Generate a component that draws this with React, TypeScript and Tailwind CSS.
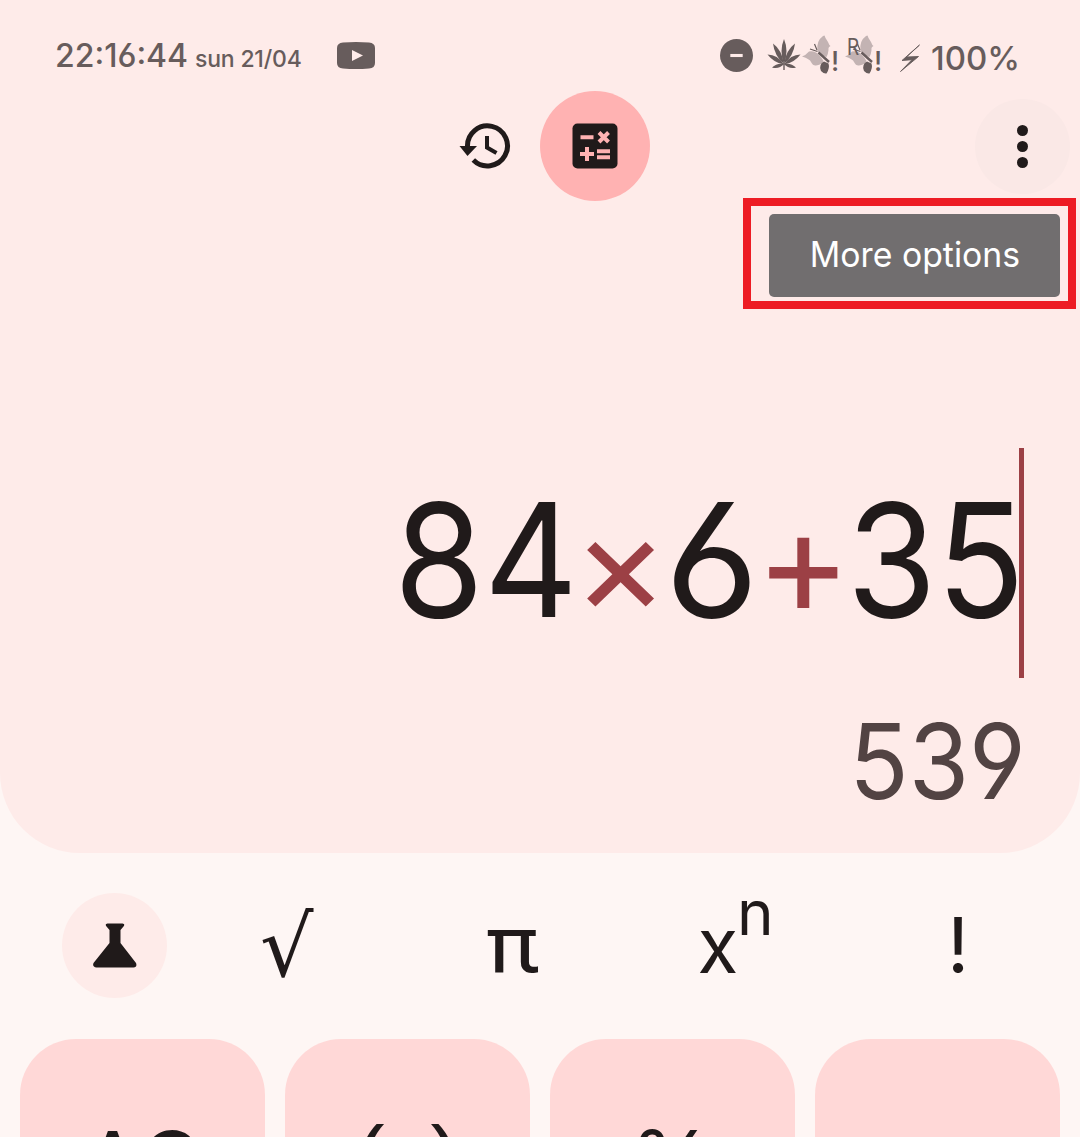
import React from "react";

const inter = "font-['Inter',sans-serif] [font-feature-settings:'cv03','cv04'] leading-none whitespace-nowrap";
const roboto = "font-['Roboto',sans-serif] leading-none whitespace-nowrap";
const dejavu = "font-['DejaVu_Sans',sans-serif] leading-none whitespace-nowrap";
const liberation = "font-['Liberation_Sans',sans-serif] leading-none whitespace-nowrap";

function Butterfly({ roaming = false }: { roaming?: boolean }) {
  return (
    <span className="relative block h-[40px] w-[40px]">
      <svg viewBox="0 0 40 40" className="h-[40px] w-[40px]">
        <g fill="#c3b3b3">
          <path d="M15.500 16Q14 6 21 1L22.500 0.500Q23 3 26 7Q27 10 28.500 11Q26 12 26.500 15Q26 20 24.500 22Q18 20 15.500 16Z" />
          <path d="M0 21.500Q4 20 7 16.500Q13 15.500 17 20Q20 23 21.500 26Q19 30 14 30.500Q11 31 9 27Q8 24 0 21.500Z" />
        </g>
        <path d="M18.500 30.500Q19 27.500 22 26.500L26.500 28.500Q28 33 24.500 38.500Q22 39 19 36Q17.500 33 18.500 30.500Z" fill="#675c5c" />
        <path d="M16.500 17.500L27 27" stroke="#675c5c" strokeWidth="2.4" />
        <path d="M15.500 16.500L8 14M15 15L12.500 9" stroke="#675c5c" strokeWidth="1.2" />
      </svg>
      {roaming && (
        <span className={`${roboto} absolute left-[1px] top-[1px] scale-x-[0.85] text-[23px] text-[#675c5c]`}>R</span>
      )}
      <span className={`${inter} absolute left-[29px] top-[13px] text-[27px] font-medium text-[#675c5c]`}>!</span>
    </span>
  );
}

function HempLeaf() {
  return (
    <svg viewBox="0 0 34 32" className="ml-[14px] mt-[4px] h-[32px] w-[34px]" fill="#675c5c">
      <path d="M17 25Q12 12 17 0Q22 12 17 25Z" />
      <path d="M17 25Q7.500 17 6 4.500Q15 11 17 25Z" />
      <path d="M17 25Q26.500 17 28 4.500Q19 11 17 25Z" />
      <path d="M17 25.500Q7 24 0.500 15.500Q10.500 15.500 17 25.500Z" />
      <path d="M17 25.500Q27 24 33.500 15.500Q23.500 15.500 17 25.500Z" />
      <path d="M17 25Q12 30.500 5 28.500Q10 23.500 17 25Z" />
      <path d="M17 25Q22 30.500 29 28.500Q24 23.500 17 25Z" />
      <path d="M16.300 24H17.700V31H16.300Z" />
    </svg>
  );
}

function StatusBar() {
  return (
    <div className="flex h-[91px] items-start pl-[55px] pt-[35px] text-[#675c5c]">
      <div className="mt-[5px] flex w-[282px] items-baseline">
        <span className={`${inter} w-[140px] text-[32px] font-medium`}>22:16:44</span>
        <span className={`${inter} text-[23px] font-medium tracking-[-0.2px]`}>sun 21/04</span>
      </div>
      <svg viewBox="0 0 38 27" className="mt-[7px] h-[27px] w-[38px]">
        <path d="M6 0.500Q19 -0.500 32 0.500Q38 1 38 6V21Q38 26 32 26.500Q19 27.500 6 26.500Q0 26 0 21V6Q0 1 6 0.500Z" fill="#675c5c" />
        <path d="M15 8L26 13.500L15 19Z" fill="#feebe9" />
      </svg>
      <svg viewBox="0 0 32 32" className="ml-[345px] mt-[4px] h-[33px] w-[33px]">
        <circle cx="16" cy="16" r="16" fill="#675c5c" />
        <path d="M10 16H22" stroke="#feebe9" strokeWidth="3" />
      </svg>
      <HempLeaf />
      <div className="ml-[1px] flex gap-[3px]">
        <Butterfly />
        <Butterfly roaming />
      </div>
      <svg viewBox="900 44 20 28" className="ml-[15px] mt-[9px] h-[28px] w-[20px]">
        <path d="M919.500 45L906.500 57L918.500 56.500L900.500 71.500L912 59.700L902 60.500Z" fill="#675c5c" stroke="#675c5c" strokeWidth="0.900" />
      </svg>
      <span className={`${inter} ml-[11px] mt-[7px] text-[33px] font-medium`}>100%</span>
    </div>
  );
}

function Toolbar() {
  return (
    <div className="flex h-[110px] items-center pl-[459px]">
      <svg viewBox="459 121 54 50" className="h-[50px] w-[54px]">
        <path d="M467.5 147A20 20 0 1 1 473.3 160" fill="none" stroke="#201a1a" strokeWidth="5" />
        <path d="M459.5 146H477L467.5 156Z" fill="#201a1a" />
        <path d="M487 136V147.500L496.500 153" fill="none" stroke="#201a1a" strokeWidth="4" />
      </svg>
      <div className="ml-[27px] flex h-[110px] w-[110px] items-center justify-center rounded-full bg-[#ffb2b2]">
        <svg viewBox="572 123 46 46" className="h-[46px] w-[46px]">
          <rect x="572.500" y="123.500" width="45" height="45" rx="5" fill="#201a1a" />
          <path d="M580.500 137.300H593.500M599 132.500L608.500 142M608.500 132.500L599 142M580 154H594M587 147V161M597 151.200H610M597 157.200H610" stroke="#ffb2b2" strokeWidth="4" />
        </svg>
      </div>
      <div className="ml-[325px] flex h-[95px] w-[95px] flex-col items-center justify-center gap-[5px] rounded-full bg-[#fae8e6]">
        <i className="h-[11px] w-[11px] rounded-full bg-[#201a1a]" />
        <i className="h-[11px] w-[11px] rounded-full bg-[#201a1a]" />
        <i className="h-[11px] w-[11px] rounded-full bg-[#201a1a]" />
      </div>
    </div>
  );
}

const tokens = [
  { text: "84", box: "w-[172px] text-[#201a1a]", glyph: "text-[158px] scale-x-[0.92]" },
  { text: "×", box: "w-[96px] pt-[6px] text-[#9c4045]", glyph: "text-[140px] scale-x-[1.04]" },
  { text: "6", box: "w-[88px] text-[#201a1a]", glyph: "text-[158px] scale-x-[1.03]" },
  { text: "+", box: "w-[94px] pt-[3px] text-[#9c4045]", glyph: "text-[149px] scale-x-[0.97]" },
  { text: "35", box: "-mr-[3px] w-[172px] text-[#201a1a]", glyph: "text-[158px] scale-x-[0.92]" },
];

function Display() {
  return (
    <div className="flex flex-col items-end">
      <div className="mr-[56px] mt-[247px] flex h-[230px] items-center">
        {tokens.map((t) => (
          <span key={t.text} className={`${t.box} flex justify-center pb-[7px]`}>
            <span className={`${inter} ${t.glyph}`}>{t.text}</span>
          </span>
        ))}
        <i className="h-[230px] w-[5px] bg-[#9c4045]" />
      </div>
      <div className={`${inter} mr-[54px] mt-[31px] origin-right scale-x-[0.94] text-[104px] text-[#524343]`}>539</div>
    </div>
  );
}

function Functions() {
  return (
    <div className="flex h-[186px] pl-[62px] pt-[40px] text-[#201a1a]">
      <div className="flex h-[105px] w-[105px] items-center justify-center rounded-full bg-[#feebe9]">
        <svg viewBox="92.500 923 44 45" className="h-[45px] w-[44px]">
          <path d="M107 923.500H122Q125 924 123 926.500L120 930V943L135.500 963Q137 967 133 967.500H96Q91.500 967 93 963L109 943V930L106 926.500Q104 924 107 923.500Z" fill="#201a1a" />
        </svg>
      </div>
      <span className={`${dejavu} ml-[93px] mt-[12px] w-[226px] text-[84px]`}>√</span>
      <span className={`${roboto} mt-[12px] w-[211px] origin-left scale-x-[1.12] text-[80px]`}>π</span>
      <span className={`${inter} mt-[14px] flex w-[250px] text-[77px]`}>
        <span className="w-[40px] scale-x-[0.97]">x</span>
        <span className="-mt-[25px] text-[62px]">n</span>
      </span>
      <span className={`${inter} mt-[14px] text-[77px]`}>!</span>
    </div>
  );
}

const keys = [
  { label: "AC", cls: `${inter} text-[86px] pt-[3px]` },
  { label: "()", cls: `${liberation} text-[88px] tracking-[46px] pl-[46px] pb-[10px]` },
  { label: "%", cls: `${inter} text-[86px]` },
  { label: "", cls: inter },
];

export default function App() {
  return (
    <div className="relative h-[1137px] w-[1080px] overflow-hidden bg-[#fef6f4]">
      <div className="h-[853px] rounded-b-[80px] bg-[#feebe9]">
        <StatusBar />
        <Toolbar />
        <Display />
      </div>
      <Functions />
      <div className="grid grid-cols-4 gap-[20px] px-[20px] text-[#201a1a]">
        {keys.map((k) => (
          <div key={k.label} className="flex h-[245px] items-center justify-center rounded-[56px] bg-[#ffd8d7]">
            <span className={k.cls}>{k.label}</span>
          </div>
        ))}
      </div>
      <div className="absolute left-[743px] top-[198px] flex h-[111px] w-[333px] items-center justify-end border-8 border-[#ed1c24] pr-[8px] pt-[4px]">
        <div className="flex h-[83px] w-[291px] items-center justify-center rounded-[5px] bg-[#716e6f]">
          <span className={`${inter} scale-x-[0.965] pb-[2px] text-[35px] text-white`}>More options</span>
        </div>
      </div>
    </div>
  );
}
